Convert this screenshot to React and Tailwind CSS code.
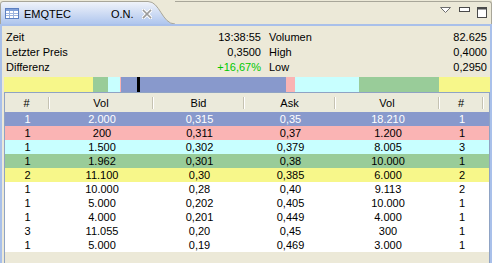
import React from "react";

const rows = [
  ["1", "2.000", "0,315", "0,35", "18.210", "1", "bg-[#8899CC] text-white"],
  ["1", "200", "0,311", "0,37", "1.200", "1", "bg-[#FAB4B4]"],
  ["1", "1.500", "0,302", "0,379", "8.005", "3", "bg-[#C8FFFF]"],
  ["1", "1.962", "0,301", "0,38", "10.000", "1", "bg-[#99CC99]"],
  ["2", "11.100", "0,30", "0,385", "6.000", "2", "bg-[#F7F78A]"],
  ["1", "10.000", "0,28", "0,40", "9.113", "2", "bg-white"],
  ["1", "5.000", "0,202", "0,405", "10.000", "1", "bg-white"],
  ["1", "4.000", "0,201", "0,449", "4.000", "1", "bg-white"],
  ["3", "11.055", "0,20", "0,45", "300", "1", "bg-white"],
  ["1", "5.000", "0,19", "0,469", "3.000", "1", "bg-white"],
];

const headers = ["#", "Vol", "Bid", "Ask", "Vol", "#"];

function TableIcon() {
  return (
    <svg width="14" height="11" viewBox="0 0 14 11" className="shrink-0">
      <rect x="0.5" y="0.5" width="13" height="10" fill="#ffffff" stroke="#5B7FC0" />
      <rect x="1" y="1" width="12" height="2" fill="#7F9FD8" />
      <path d="M1 5.5H13M1 7.5H13M4.5 3V10M8.5 3V10" stroke="#9DB4DE" strokeWidth="1" />
    </svg>
  );
}

function CloseIcon() {
  return (
    <svg width="10" height="10" viewBox="0 0 10 10" className="shrink-0">
      <path d="M1.5 1.5L8.5 8.5M8.5 1.5L1.5 8.5" stroke="#ffffff" strokeWidth="3.4" strokeLinecap="square" />
      <path d="M1.5 1.5L8.5 8.5M8.5 1.5L1.5 8.5" stroke="#9A9A9A" strokeWidth="1.6" strokeLinecap="square" />
    </svg>
  );
}

export default function App() {
  return (
    <div className="w-[492px] h-[263px] overflow-hidden bg-[#ECE9D8] font-['Liberation_Sans',Arial,sans-serif] text-[11px] text-black">
      {/* tab strip */}
      <div className="h-[24px] flex">
        <div className="relative w-[175px] h-[24px] shrink-0">
          <svg width="175" height="24" viewBox="0 0 175 24" className="absolute inset-0">
            <defs>
              <linearGradient id="tabg" x1="0" y1="0" x2="0" y2="1">
                <stop offset="0" stopColor="#F1F4FA" />
                <stop offset="1" stopColor="#AFC6EE" />
              </linearGradient>
            </defs>
            <path d="M0.5 24 L0.5 4 Q0.5 1.5 3 1.5 L148 1.5 C160 1.5 162 24 175 24 Z" fill="url(#tabg)" />
            <path d="M0.5 24 L0.5 4 Q0.5 1.5 3 1.5 L148 1.5 C160 1.5 162 24 175 24" fill="none" stroke="#A8A699" />
          </svg>
          <div className="relative flex items-center h-full pl-[5px] pt-[3px]">
            <TableIcon />
            <span className="ml-[5px] w-[87px] leading-[14px]">EMQTEC</span>
            <span className="w-[31px] leading-[14px]">O.N.</span>
            <CloseIcon />
          </div>
        </div>
        <div className="flex-1 mt-[1px] border-t border-r border-[#A8A699] rounded-tr-[3px] flex items-start justify-end pt-[4px] pr-[4px]">
          <svg width="11" height="6" viewBox="0 0 11 6" className="mt-[1px]">
            <path d="M0.5 0.5H10.5L5.5 5.5Z" fill="#ffffff" stroke="#6E6E6E" />
          </svg>
          <svg width="11" height="5" viewBox="0 0 11 5" className="ml-[8px] mt-[1px]">
            <rect x="0.5" y="0.5" width="10" height="4" fill="#ffffff" stroke="#4A4A4A" />
          </svg>
          <svg width="10" height="11" viewBox="0 0 10 11" className="ml-[7px] mt-[1px]">
            <rect x="0.5" y="0.5" width="9" height="10" fill="#ffffff" stroke="#4A4A4A" />
            <rect x="0.5" y="0.5" width="9" height="2" fill="#4A4A4A" />
          </svg>
        </div>
      </div>

      {/* view body */}
      <div className="h-[239px] border-t-2 border-x-2 border-[#A9C0EA] flex flex-col">
        {/* info */}
        <div className="grid grid-cols-[255px_218px] gap-x-[8px] pl-[4px] pt-[4px] leading-[15px]">
          <div className="flex justify-between"><span>Zeit</span><span>13:38:55</span></div>
          <div className="flex justify-between"><span>Volumen</span><span>82.625</span></div>
          <div className="flex justify-between"><span>Letzter Preis</span><span>0,3500</span></div>
          <div className="flex justify-between"><span>High</span><span>0,4000</span></div>
          <div className="flex justify-between"><span>Differenz</span><span className="text-[#00C800]">+16,67%</span></div>
          <div className="flex justify-between"><span>Low</span><span>0,2950</span></div>
        </div>

        {/* depth bar */}
        <div className="flex h-[15px] mt-[2px] ml-[2px]">
          <div className="w-[89px] bg-[#F7F78A]" />
          <div className="w-[15px] bg-[#99CC99]" />
          <div className="w-[12px] bg-[#C8FFFF]" />
          <div className="w-[1px] bg-[#FAB4B4]" />
          <div className="w-[16px] bg-[#8899CC]" />
          <div className="w-[3px] bg-black" />
          <div className="w-[146px] bg-[#8899CC]" />
          <div className="w-[9px] bg-[#FAB4B4]" />
          <div className="w-[64px] bg-[#C8FFFF]" />
          <div className="w-[80px] bg-[#99CC99]" />
          <div className="flex-1 bg-[#F7F78A]" />
        </div>

        {/* table */}
        <div className="flex-1 ml-[2px] border border-b-0 border-[#8FA3C4] flex flex-col">
          <div className="grid grid-cols-[45px_104px_91px_91px_104px_44px_1fr] h-[19px] bg-[#EBEADB]">
            {headers.map((h, i) => (
              <div key={i} className="flex items-center">
                <span className="flex-1 text-center leading-[14px]">{h}</span>
                <div className="w-[2px] h-[12px] border-l border-[#C5C2B2] bg-white" />
              </div>
            ))}
            <div />
          </div>
          {rows.map((r, i) => (
            <div
              key={i}
              className={`grid grid-cols-[45px_104px_91px_91px_104px_44px_1fr] h-[14px] leading-[14px] ${r[6]}`}
            >
              {r.slice(0, 6).map((c, j) => (
                <div key={j} className="text-center">{c}</div>
              ))}
              <div />
            </div>
          ))}
        </div>
      </div>
    </div>
  );
}
